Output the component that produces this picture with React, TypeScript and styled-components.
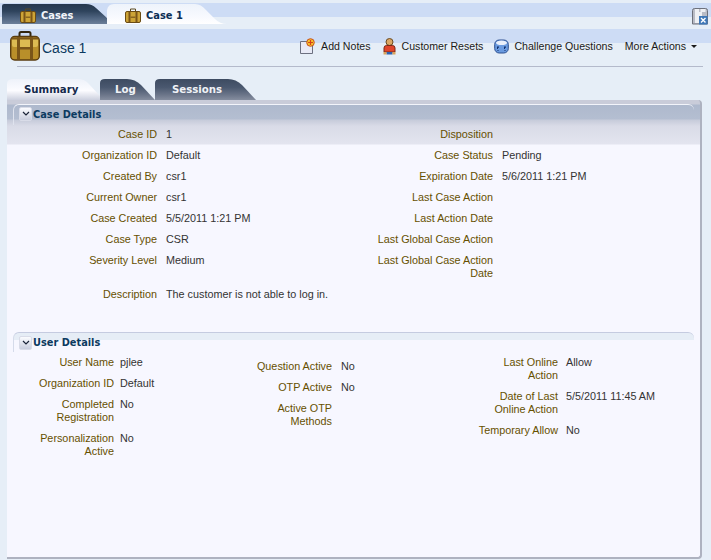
import React from 'react';
import styled, { createGlobalStyle } from 'styled-components';

const Global = createGlobalStyle`
  html, body {
    margin: 0;
    padding: 0;
    background: #e6eef7;
    font-family: "Liberation Sans", Arial, sans-serif;
    font-size: 10.8px;
  }
`;

const Page = styled.div`
  width: 711px;
  height: 560px;
  overflow: hidden;
  background: linear-gradient(
    to bottom,
    #e6eef7 0, #e6eef7 3px,
    #cddcf5 3px, #cddcf5 17px,
    #e6eef7 17px, #e6eef7 29px,
    #cddcf5 29px, #cddcf5 43px,
    #e6eef7 43px
  );
`;

const TopBar = styled.div`
  display: flex;
  height: 29px;
  padding: 4px 2px 0;
  box-sizing: border-box;
`;

const MainTab = styled.div<{ $active?: boolean; $width: number }>`
  display: flex;
  align-items: center;
  gap: 5px;
  width: ${p => p.$width}px;
  height: 20px;
  padding: 3px 0 0 18px;
  box-sizing: border-box;
  font: bold 9.9px "DejaVu Sans", sans-serif;
  color: ${p => (p.$active ? '#0c2f55' : '#f2f5fa')};
  background: ${p => p.$active
    ? 'linear-gradient(to bottom, #eef3fb 0, #f7f9fe 60%, #ffffff 100%)'
    : 'linear-gradient(to bottom, #26384e 0, #2e435c 35%, #4f6480 70%, #6c7f99 100%)'};
  clip-path: ${p => p.$active
    ? 'path("M0 20 L0 6 Q1 0 7 0 L88 0 Q94 0 99 6 L108 15 Q113 20 120 20 Z")'
    : 'path("M0 20 L0 2 Q0 0 2 0 L84 0 Q90 0 94 4 L105 14 L105 20 Z")'};
`;

const CloseButton = styled.div`
  margin-left: auto;
  margin-top: 4px;
  margin-right: 1px;
  width: 16px;
  height: 17px;
`;

const TitleRow = styled.div`
  display: flex;
  align-items: flex-start;
  height: 37px;
  margin: 0 14px 0 10px;
`;

const BriefcaseSlot = styled.div`
  margin-top: 2px;
  height: 30px;
`;

const Title = styled.h1`
  margin: 11px 0 0 2px;
  font-size: 14px;
  font-weight: normal;
  line-height: 16px;
  color: #0c3a60;
`;

const Actions = styled.div`
  display: flex;
  align-items: center;
  gap: 12px;
  margin-left: auto;
  margin-top: 7px;
  height: 20px;
`;

const Action = styled.div<{ $gap?: number; $pull?: number }>`
  display: flex;
  align-items: center;
  gap: ${p => p.$gap ?? 6}px;
  margin-right: ${p => p.$pull ?? 0}px;
  font-size: 10.6px;
  color: #1a1a1a;
  white-space: nowrap;
`;

const Rule = styled.div`
  height: 1px;
  margin: 0 8px 0 17px;
  background: #b4bacb;
`;

const SubTabs = styled.div`
  display: flex;
  height: 21px;
  margin: 12px 0 0 7px;
`;

const SubTab = styled.div<{ $active?: boolean; $width: number; $pad: number }>`
  width: ${p => p.$width}px;
  height: 21px;
  padding: 4px 0 0 ${p => p.$pad}px;
  box-sizing: border-box;
  font: bold 10.2px/14px "DejaVu Sans", sans-serif;
  color: ${p => (p.$active ? '#14294c' : '#f0f2f6')};
  background: ${p => p.$active
    ? 'linear-gradient(to bottom, #eef2fa 0, #fcfcff 55%, #ccd0de 100%)'
    : 'linear-gradient(to bottom, #3d4b61 0, #4a586f 40%, #6b7589 75%, #858d9f 100%)'};
  clip-path: ${p => p.$active
    ? `path("M0 21 L0 5 Q0 0 6 0 L${p.$width - 22} 0 Q${p.$width - 16} 0 ${p.$width - 12} 4 L${p.$width} 17 L${p.$width} 21 Z")`
    : `path("M0 21 L0 4 Q0 0 5 0 L${p.$width - 28} 0 Q${p.$width - 20} 0 ${p.$width - 14} 6 L${p.$width} 21 Z")`};
`;

const Panel = styled.div`
  width: 695px;
  height: 459px;
  margin-left: 7px;
  box-sizing: border-box;
  padding: 4px 6px 0;
  border-right: 2px solid #aeb2c0;
  border-bottom: 2px solid #aeb2c0;
  border-top-right-radius: 4px;
  border-bottom-right-radius: 4px;
  background: linear-gradient(
    to bottom,
    #c9ccd9 0, #c9ccd9 4px,
    #aeb9cd 5px, #b4bed1 19px,
    #c6cbda 20px, #d9dbe7 26px, #e3e4ef 44px,
    #f7f7ff 45px
  );
`;

const SectionHeader = styled.div<{ $top?: boolean }>`
  display: flex;
  align-items: center;
  gap: 1px;
  height: ${p => (p.$top ? 21 : 20)}px;
  box-sizing: border-box;
  padding: 0 0 ${p => (p.$top ? 2 : 0)}px 5px;
  font: bold 9.8px "DejaVu Sans", sans-serif;
  color: #0c3a60;
  border-top: 1px solid ${p => (p.$top ? '#f2f4fa' : '#c5cbe0')};
  border-left: 1px solid ${p => (p.$top ? '#dfe3ee' : '#d5dbea')};
  border-top-left-radius: 6px;
  border-top-right-radius: 6px;
  background: ${p => (p.$top
    ? 'none'
    : 'linear-gradient(to bottom, #e6edf6 0, #e6edf6 7px, transparent 7px)')};
`;

const Toggle = styled.div`
  display: flex;
  align-items: center;
  justify-content: center;
  width: 11px;
  height: 12px;
  border: 1px solid #d9dce8;
  border-radius: 2px;
  background: linear-gradient(to bottom, #fbfcff, #c9cede);
`;

const CaseGrid = styled.div`
  display: grid;
  grid-template-columns: 144px 216px 120px 1fr;
  height: 207px;
  align-content: start;
`;

const Label = styled.div`
  padding: 3px 0 5px;
  text-align: right;
  line-height: 13px;
  color: #665000;
`;

const Value = styled.div<{ $gap?: number }>`
  padding: 3px 0 5px ${p => p.$gap ?? 9}px;
  line-height: 13px;
  color: #333333;
`;

const UserColumns = styled.div`
  display: flex;
  padding-top: 1px;
`;

const UserForm = styled.div<{ $left: number; $width: number; $top: number }>`
  display: grid;
  grid-template-columns: 84px 1fr;
  width: ${p => p.$width}px;
  margin-left: ${p => p.$left}px;
  margin-top: ${p => p.$top}px;
  align-content: start;
`;

const Briefcase = () => (
  <svg width="30" height="30" viewBox="0 0 30 30" style={{ display: 'block' }}>
    <path d="M9.500 6V2.500Q9.500 1 11 1h8Q20.500 1 20.500 2.500V6" fill="none" stroke="#33260f" strokeWidth="2" />
    <rect x="0.700" y="5.500" width="28.600" height="23.500" rx="4" fill="#b98f2a" stroke="#5a3d10" strokeWidth="1.400" />
    <rect x="2" y="7" width="26" height="9" rx="2" fill="#dcbb52" />
    <rect x="2" y="6.500" width="26" height="2" fill="#7a5518" />
    <rect x="7" y="6" width="3" height="22" fill="#7a5518" />
    <rect x="20" y="6" width="3" height="22" fill="#7a5518" />
    <rect x="10" y="16" width="10" height="2.500" fill="#7a5518" />
  </svg>
);

const TabCase = () => (
  <svg width="16" height="15" viewBox="0 0 16 15">
    <path d="M5.500 3.500V1h5v2.500" fill="none" stroke="#5c4a20" />
    <rect x="0.500" y="3.500" width="15" height="11" rx="1.500" fill="#cda437" stroke="#6b4c14" />
    <rect x="3.500" y="4" width="2" height="10" fill="#7a5518" />
    <rect x="10.500" y="4" width="2" height="10" fill="#7a5518" />
    <rect x="5.500" y="8.500" width="5" height="1.500" fill="#8a6520" />
  </svg>
);

const NotesIcon = () => (
  <svg width="15" height="16" viewBox="0 0 15 16">
    <path d="M0.500 3.500h12v12h-12z" fill="#e8eaf6" stroke="#6c7080" />
    <circle cx="10.500" cy="4.500" r="3.800" fill="#f5c32c" stroke="#c9501c" />
    <path d="M10.500 2v5M8 4.500h5" stroke="#d8401c" strokeWidth="1.200" />
  </svg>
);

const PersonIcon = () => (
  <svg width="13" height="17" viewBox="0 0 13 17">
    <circle cx="6.500" cy="4" r="3.500" fill="#dba765" stroke="#6b4a20" />
    <path d="M1 14V10Q1 7.500 3.500 7.500h6Q12 7.500 12 10v4z" fill="#e0452c" stroke="#7c2a18" />
    <path d="M3.500 14h6v2.500h-6z" fill="#2c62b0" />
    <path d="M0.500 14h3v2.500h-3zM9.500 14h3v2.500h-3z" fill="#d9a35c" />
  </svg>
);

const QuestionsIcon = () => (
  <svg width="15" height="15" viewBox="0 0 15 15">
    <rect x="0.700" y="1" width="13.600" height="13" rx="4.500" fill="#6b9be0" stroke="#2c4f90" />
    <ellipse cx="7.500" cy="3.800" rx="5.500" ry="2.300" fill="#eaf0fb" />
    <path d="M3 7.500h2v1.200h-1v1.300H3zM10 7.500h2v1.200h-1v1.300h-1zM3.500 11h1v1h-1zM10.500 11h1v1h-1z" fill="#10306c" />
  </svg>
);

const CloseIcon = () => (
  <svg width="16" height="17" viewBox="0 0 16 17">
    <path d="M0.500 2.500Q0.500 0.500 2.500 0.500h11q2 0 2 2v13.500H0.500z" fill="#b9bcc6" stroke="#6d717c" />
    <rect x="3" y="1" width="4" height="3" fill="#eef0f4" />
    <rect x="8.500" y="1" width="5" height="3" fill="#eef0f4" />
    <rect x="3" y="4" width="7" height="11" fill="#eef0f4" />
    <rect x="7" y="8" width="8.500" height="8.500" fill="#3f78b8" />
    <path d="M9 10l4.500 4.500M13.500 10L9 14.500" stroke="#fff" strokeWidth="1.400" />
  </svg>
);

const Chevron = () => (
  <svg width="8" height="6" viewBox="0 0 8 6">
    <path d="M1 1l3 3 3-3" fill="none" stroke="#1a2438" strokeWidth="1.200" />
  </svg>
);

const MenuCaret = styled.span`
  width: 0;
  height: 0;
  margin-left: -1px;
  border-left: 3px solid transparent;
  border-right: 3px solid transparent;
  border-top: 3px solid #1a1a1a;
`;

const caseRows: [string, string, string, string][] = [
  ['Case ID', '1', 'Disposition', ''],
  ['Organization ID', 'Default', 'Case Status', 'Pending'],
  ['Created By', 'csr1', 'Expiration Date', '5/6/2011 1:21 PM'],
  ['Current Owner', 'csr1', 'Last Case Action', ''],
  ['Case Created', '5/5/2011 1:21 PM', 'Last Action Date', ''],
  ['Case Type', 'CSR', 'Last Global Case Action', ''],
  ['Severity Level', 'Medium', 'Last Global Case Action Date', ''],
  ['Description', 'The customer is not able to log in.', '', ''],
];

const userForms = [
  {
    left: 17, width: 218, top: 0, gap: 6,
    rows: [['User Name', 'pjlee'], ['Organization ID', 'Default'], ['Completed Registration', 'No'], ['Personalization Active', 'No']],
  },
  {
    left: 0, width: 226, top: 4, gap: 9,
    rows: [['Question Active', 'No'], ['OTP Active', 'No'], ['Active OTP Methods', '']],
  },
  {
    left: 0, width: 220, top: 0, gap: 8,
    rows: [['Last Online Action', 'Allow'], ['Date of Last Online Action', '5/5/2011 11:45 AM'], ['Temporary Allow', 'No']],
  },
];

export default function App() {
  return (
    <Page>
      <Global />
      <TopBar>
        <MainTab $width={105}><TabCase />Cases</MainTab>
        <MainTab $active $width={120}><TabCase />Case 1</MainTab>
        <CloseButton><CloseIcon /></CloseButton>
      </TopBar>
      <TitleRow>
        <BriefcaseSlot><Briefcase /></BriefcaseSlot>
        <Title>Case 1</Title>
        <Actions>
          <Action><NotesIcon />Add Notes</Action>
          <Action $pull={-1}><PersonIcon />Customer Resets</Action>
          <Action $gap={5}><QuestionsIcon />Challenge Questions</Action>
          <Action>More Actions<MenuCaret /></Action>
        </Actions>
      </TitleRow>
      <Rule />
      <SubTabs>
        <SubTab $active $width={93} $pad={17}>Summary</SubTab>
        <SubTab $width={55} $pad={15}>Log</SubTab>
        <SubTab $width={101} $pad={17}>Sessions</SubTab>
      </SubTabs>
      <Panel>
        <SectionHeader $top><Toggle><Chevron /></Toggle>Case Details</SectionHeader>
        <CaseGrid>
          {caseRows.map(row => (
            <React.Fragment key={row[0]}>
              <Label>{row[0]}</Label>
              <Value>{row[1]}</Value>
              <Label>{row[2]}</Label>
              <Value>{row[3]}</Value>
            </React.Fragment>
          ))}
        </CaseGrid>
        <SectionHeader><Toggle><Chevron /></Toggle>User Details</SectionHeader>
        <UserColumns>
          {userForms.map(form => (
            <UserForm key={form.rows[0][0]} $left={form.left} $width={form.width} $top={form.top}>
              {form.rows.map(([label, value]) => (
                <React.Fragment key={label}>
                  <Label>{label}</Label>
                  <Value $gap={form.gap}>{value}</Value>
                </React.Fragment>
              ))}
            </UserForm>
          ))}
        </UserColumns>
      </Panel>
    </Page>
  );
}
